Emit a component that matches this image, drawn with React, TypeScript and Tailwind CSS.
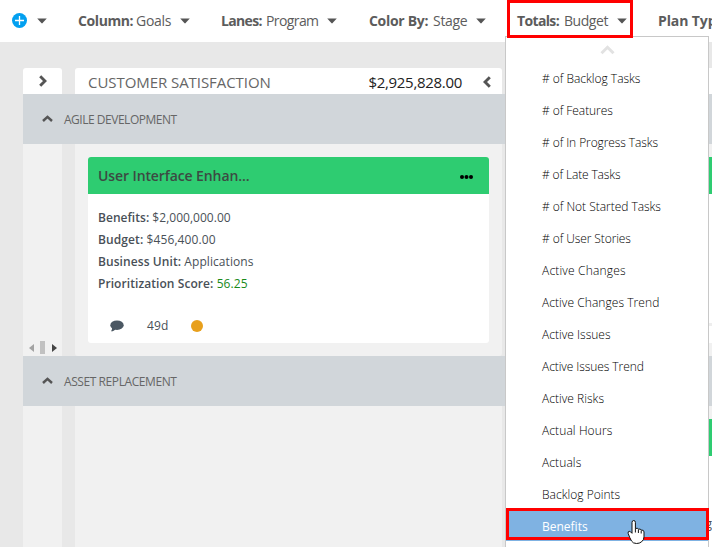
import React from "react";

const menu: [string, string][] = [
  ["# of Backlog Tasks", "tracking-[-0.02px]"],
  ["# of Features", "tracking-[-0.06px]"],
  ["# of In Progress Tasks", "tracking-[-0.09px]"],
  ["# of Late Tasks", "tracking-[-0.14px]"],
  ["# of Not Started Tasks", "tracking-[-0.03px]"],
  ["# of User Stories", "tracking-[-0.09px]"],
  ["Active Changes", "tracking-[0.18px]"],
  ["Active Changes Trend", "tracking-[0.06px]"],
  ["Active Issues", "tracking-[0.02px]"],
  ["Active Issues Trend", "tracking-[-0.08px]"],
  ["Active Risks", "tracking-[0.03px]"],
  ["Actual Hours", "tracking-[0.1px]"],
  ["Actuals", "tracking-[0.1px]"],
  ["Backlog Points", "tracking-[0.02px]"],
];

function Caret() {
  return (
    <svg className="block shrink-0" width="10" height="6" viewBox="0 0 10 6">
      <path d="M0.2 0.4h9.6L5.6 5.1q-.6.6-1.2 0z" fill="#555" />
    </svg>
  );
}

function Chevron({ dir }: { dir: "up" | "left" | "right" }) {
  if (dir === "up") {
    return (
      <svg className="block shrink-0" width="11" height="7" viewBox="0 0 11 7">
        <path d="M1 6 5.5 1.9 10 6" fill="none" stroke="#555" strokeWidth="2.5" />
      </svg>
    );
  }
  return (
    <svg className="block shrink-0" width="8" height="12" viewBox="0 0 8 12">
      <path d={dir === "right" ? "M1.2 1.2 6 6l-4.8 4.8" : "M6.8 1.2 2 6l4.8 4.8"} fill="none" stroke="#555" strokeWidth="2.9" />
    </svg>
  );
}

type FilterProps = { label: string; value: string; width: string; labelStyle: string; tracking: string };

function Filter({ label, value, width, labelStyle, tracking }: FilterProps) {
  return (
    <div className={`flex h-[42px] shrink-0 items-center whitespace-nowrap text-[14px] text-[#5c5c5c] ${width}`}>
      <b className={`-mt-px shrink-0 font-bold ${labelStyle}`}>{label}</b>
      <span className={`-mt-px flex-1 ${tracking}`}>{value}</span>
      <Caret />
    </div>
  );
}

function Band({ title, tracking }: { title: string; tracking: string }) {
  return (
    <div className="flex h-[50px] items-center bg-[#d1d6da] pl-[19px] text-[12px] text-[#666]">
      <div className="-mt-px">
        <Chevron dir="up" />
      </div>
      <span className={`mt-[2px] ml-[11px] ${tracking}`}>{title}</span>
    </div>
  );
}

function Row({ label, value, tracking, green = false }: { label: string; value: string; tracking: string; green?: boolean }) {
  return (
    <div className={`h-[22px] whitespace-nowrap leading-[22px] ${tracking}`}>
      <b className="font-semibold">{label}</b> <span className={green ? "text-[#1a8a1a]" : ""}>{value}</span>
    </div>
  );
}

export default function App() {
  return (
    <div className="relative h-[547px] w-[712px] overflow-hidden bg-[#e8e8e8] font-['Open_Sans','Noto_Sans',sans-serif]">
      <header className="flex h-[42px] bg-white pl-3">
        <div className="flex w-[35px] shrink-0 items-center justify-between">
          <svg className="-mt-px block" width="15" height="15" viewBox="0 0 15 15">
            <circle cx="7.5" cy="7.5" r="7.5" fill="#03a0f0" />
            <path d="M7.5 3v9M3 7.5h9" stroke="#fff" strokeWidth="1.3" />
          </svg>
          <Caret />
        </div>
        <div className="w-[31px] shrink-0" />
        <Filter label="Column:" value="Goals" width="w-[112px]" labelStyle="w-[58px] tracking-[-0.4px]" tracking="tracking-[-0.3px]" />
        <div className="w-[31px] shrink-0" />
        <Filter label="Lanes:" value="Program" width="w-[116px]" labelStyle="w-[45px] tracking-[-0.65px]" tracking="tracking-[-0.6px]" />
        <div className="w-8 shrink-0" />
        <Filter label="Color By:" value="Stage" width="w-[117px]" labelStyle="w-[64px] tracking-[-0.3px]" tracking="tracking-[-0.3px]" />
        <div className="w-[31px] shrink-0" />
        <Filter label="Totals:" value="Budget" width="w-[110px]" labelStyle="w-[47px] tracking-[-0.65px]" tracking="tracking-[-0.45px]" />
        <div className="w-[31px] shrink-0" />
        <div className="flex h-[42px] min-w-0 flex-1 items-center overflow-hidden text-[14px] text-[#5c5c5c]">
          <b className="-mt-px shrink-0 tracking-[-0.1px] whitespace-nowrap">Plan Typ</b>
        </div>
      </header>

      <main className="mt-[26px] ml-[23px] w-[689px]">
        <div className="flex h-[26px] text-[15px]">
          <div className="flex w-[39px] items-center justify-center rounded-t-[3px] bg-white">
            <Chevron dir="right" />
          </div>
          <div className="ml-[13px] flex w-[427px] items-center rounded-t-[3px] bg-white pt-[2px] pr-[11px] pl-[13px]">
            <span className="flex-1 tracking-[-0.06px] text-[#666]">CUSTOMER SATISFACTION</span>
            <span className="mr-[21px] tracking-[-0.3px] text-[#222]">$2,925,828.00</span>
            <Chevron dir="left" />
          </div>
          <div className="ml-[13px] flex-1 rounded-tl-[3px] bg-white" />
        </div>

        <Band title="AGILE DEVELOPMENT" tracking="tracking-[-0.48px]" />
        <div className="flex h-[212px]">
          <div className="flex w-[39px] flex-col justify-end bg-[#f1f1f1]">
            <div className="flex h-[15px] items-start pl-[6px]">
              <svg className="mt-[3px] block" width="5" height="8" viewBox="0 0 5 8">
                <path d="M5 0v8L0 4z" fill="#a3a3a3" />
              </svg>
              <div className="ml-[6px] h-[13px] w-[5px] bg-[#c1c1c1]" />
              <svg className="mt-[3px] ml-[7px] block" width="5" height="8" viewBox="0 0 5 8">
                <path d="M0 0v8l5-4z" fill="#444" />
              </svg>
            </div>
          </div>
          <div className="ml-[13px] w-[427px] rounded-b-[3px] bg-[#f1f1f1] p-[13px]">
            <article className="flex h-[186px] flex-col overflow-hidden rounded-[3px] bg-white text-[#495057]">
              <div className="flex h-[37px] items-center justify-between bg-[#2ecc71] pr-4 pl-[10px] text-[14px]">
                <span className="font-semibold tracking-[-0.1px] text-[#3c4a43]">User Interface Enhan...</span>
                <svg className="mt-[2px] block" width="13" height="4" viewBox="0 0 13 4">
                  <circle cx="2" cy="2" r="2" />
                  <circle cx="6.5" cy="2" r="2" />
                  <circle cx="11" cy="2" r="2" />
                </svg>
              </div>
              <div className="pt-[13px] pl-[10px] text-[12px]">
                <Row label="Benefits:" value="$2,000,000.00" tracking="tracking-[0.03px]" />
                <Row label="Budget:" value="$456,400.00" tracking="tracking-[0.1px]" />
                <Row label="Business Unit:" value="Applications" tracking="tracking-[0.08px]" />
                <Row label="Prioritization Score:" value="56.25" tracking="tracking-[0.07px]" green />
              </div>
              <div className="mt-5 flex h-[22px] items-center pl-[22px] text-[12px]">
                <svg className="block" width="14" height="12" viewBox="0 0 14 12">
                  <ellipse cx="7" cy="5.2" rx="6.7" ry="4.8" fill="#4b5863" />
                  <path d="M2 7.5c.3 1.8-.4 3-1 3.8 2 .2 4-1 4.8-2.3z" fill="#4b5863" />
                </svg>
                <span className="ml-[23px] w-11 tracking-[0.2px]">49d</span>
                <span className="-mt-px block size-[12px] rounded-full bg-[#e8a01c]" />
              </div>
            </article>
          </div>
          <div className="ml-[13px] flex-1 bg-[#f1f1f1] p-[13px] pr-0">
            <div className="h-[186px] bg-white">
              <div className="h-[37px] bg-[#2ecc71]" />
              <div className="mt-[129px] h-[3px] bg-[#eee]" />
            </div>
          </div>
        </div>

        <Band title="ASSET REPLACEMENT" tracking="tracking-[-0.42px]" />
        <div className="flex h-[141px]">
          <div className="w-[39px] bg-[#f1f1f1]" />
          <div className="ml-[13px] w-[427px] bg-[#f1f1f1]" />
          <div className="ml-[13px] flex-1 bg-[#f1f1f1] pt-[13px] pl-[13px]">
            <div className="h-[128px] bg-white">
              <div className="h-[37px] bg-[#2ecc71]" />
              <div className="pt-[57px] text-right text-[12px] leading-[22px] text-[#495057] underline">g</div>
            </div>
          </div>
        </div>
      </main>

      <div className="absolute top-[36px] left-[505px] flex h-[511px] w-[204px] flex-col border border-b-0 border-[#c8c8c8] bg-white text-[12px] text-black">
        <div className="flex h-[26px] justify-center pt-[8px]">
          <svg className="block" width="15" height="10" viewBox="0 0 15 10">
            <path d="M1.5 8.300 7.5 2.300l6 6" fill="none" stroke="#e2e2e2" strokeWidth="3" />
          </svg>
        </div>
        {menu.map(([item, tracking]) => (
          <div key={item} className={`h-8 shrink-0 pl-9 font-light leading-8 ${tracking}`}>
            {item}
          </div>
        ))}
        <div className="h-[30px] shrink-0 bg-[#7fb2e2] pl-9 leading-8 text-white">Benefits</div>
      </div>

      <div className="absolute top-0 left-[507px] h-[38px] w-[126px] border-[3px] border-[#f00]" />
      <div className="absolute top-[508px] left-[506px] h-[32px] w-[203px] border-[3px] border-[#f00]" />

      <svg className="absolute top-[520px] left-[627px]" width="19" height="24" viewBox="0 0 19 24">
        <path
          d="M5 2.5q0-2 1.7-2t1.7 2v6q2.6-.9 3 .7 2.3-.7 2.8.9 2.6-.5 2.8 1.8v5q0 3-2.5 5-2 1.6-5 1.6-3.5 0-5-2.500Q2.5 17.5 1.2 13.5q-.6-2 1-2.2 1.300 0 2.800 2z"
          fill="#fff"
          stroke="#111"
          strokeWidth="1"
        />
        <path d="M8.4 8.5v4M11.4 9.5v3.5M14.2 10.5v3" stroke="#111" fill="none" />
      </svg>
    </div>
  );
}
